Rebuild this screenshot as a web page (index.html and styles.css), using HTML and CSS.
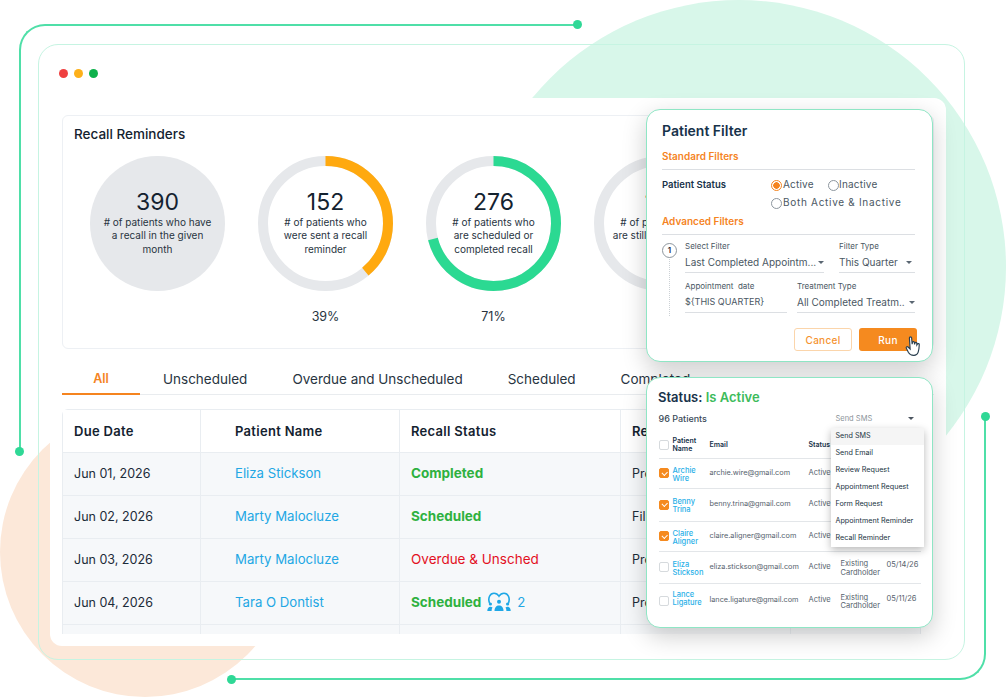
FILE: index.html
```html
<!DOCTYPE html>
<html lang="en">
<head>
    <meta charset="UTF-8">
    <title>Recall Reminders</title>
    <link rel="stylesheet" href="styles.css">
</head>
<body>
<div class="stage">
    <div class="blob blob-green"></div>
    <div class="blob blob-peach"></div>
    <div class="line line-top"></div>
    <div class="line line-bottom"></div>

    <div class="frame">
        <div class="window-dots">
            <span class="dot dot-red"></span>
            <span class="dot dot-yellow"></span>
            <span class="dot dot-green"></span>
        </div>

        <div class="panel">
            <section class="recall-card">
                <h2>Recall Reminders</h2>
                <div class="stats">
                    <div class="stat">
                        <div class="ring ring-solid">
                            <strong>390</strong>
                            <p># of patients who have a recall in the given month</p>
                        </div>
                    </div>
                    <div class="stat">
                        <div class="ring">
                            <svg viewBox="0 0 135 135"><circle class="track" cx="67.5" cy="67.5" r="62.5" pathLength="100"/><circle class="value-orange" cx="67.5" cy="67.5" r="62.5" pathLength="100" stroke-dasharray="39 100"/></svg>
                            <strong>152</strong>
                            <p># of patients who were sent a recall reminder</p>
                        </div>
                        <span class="percent">39%</span>
                    </div>
                    <div class="stat">
                        <div class="ring">
                            <svg viewBox="0 0 135 135"><circle class="track" cx="67.5" cy="67.5" r="62.5" pathLength="100"/><circle class="value-green" cx="67.5" cy="67.5" r="62.5" pathLength="100" stroke-dasharray="71 100"/></svg>
                            <strong>276</strong>
                            <p># of patients who are scheduled or completed recall</p>
                        </div>
                        <span class="percent">71%</span>
                    </div>
                    <div class="stat">
                        <div class="ring">
                            <svg viewBox="0 0 135 135"><circle class="track" cx="67.5" cy="67.5" r="62.5" pathLength="100"/></svg>
                            <strong>114</strong>
                            <p># of patients who are still unscheduled</p>
                        </div>
                    </div>
                </div>
            </section>

            <nav class="tabs">
                <a class="tab tab-active">All</a>
                <a class="tab">Unscheduled</a>
                <a class="tab">Overdue and Unscheduled</a>
                <a class="tab">Scheduled</a>
                <a class="tab">Completed</a>
            </nav>

            <div class="table-wrap">
                <table class="recall-table">
                    <thead>
                        <tr><th>Due Date</th><th class="pad-name">Patient Name</th><th>Recall Status</th><th>Recall Type</th><th></th></tr>
                    </thead>
                    <tbody>
                        <tr>
                            <td>Jun 01, 2026</td>
                            <td class="pad-name link">Eliza Stickson</td>
                            <td class="done">Completed</td>
                            <td>Prophy</td>
                            <td class="actions"><i class="act act-a"></i><i class="act act-b"></i><i class="act act-c"></i></td>
                        </tr>
                        <tr>
                            <td>Jun 02, 2026</td>
                            <td class="pad-name link">Marty Malocluze</td>
                            <td class="done">Scheduled</td>
                            <td>Fillings</td>
                            <td class="actions"><i class="act act-a"></i><i class="act act-b"></i><i class="act act-c"></i></td>
                        </tr>
                        <tr>
                            <td>Jun 03, 2026</td>
                            <td class="pad-name link">Marty Malocluze</td>
                            <td class="late">Overdue &amp; Unsched</td>
                            <td>Prophy</td>
                            <td class="actions"><i class="act act-a"></i><i class="act act-b"></i><i class="act act-c"></i></td>
                        </tr>
                        <tr>
                            <td>Jun 04, 2026</td>
                            <td class="pad-name link">Tara O Dontist</td>
                            <td>
                                <div class="status-group">
                                    <span class="done">Scheduled</span>
                                    <svg class="family-icon" viewBox="0 0 24 20">
                                        <path class="family-arc" d="M2.5 11C.6 6 3 1.2 7 1.2c2.300 0 3.900 1.200 5 3 1.100-1.800 2.700-3 5-3 4 0 6.400 4.800 4.500 9.800"/>
                                        <circle cx="12" cy="9.800" r="2"/>
                                        <path d="M7.500 19c0-3.600 1.900-5.600 4.500-5.600s4.500 2 4.500 5.600z"/>
                                        <circle cx="3.400" cy="12" r="1.600"/>
                                        <circle cx="20.600" cy="12" r="1.600"/>
                                        <path d="M.3 19c0-2.600 1.300-4.300 3.100-4.300.8 0 1.500.3 2.100.9-.6 1-.9 2.100-.9 3.400zM23.700 19c0-2.600-1.300-4.300-3.100-4.300-.8 0-1.500.3-2.100.9.6 1 .9 2.100.9 3.400z"/>
                                    </svg>
                                    <span class="link">2</span>
                                </div>
                            </td>
                            <td>Prophy</td>
                            <td class="actions"><i class="act act-a"></i><i class="act act-b"></i><i class="act act-c"></i></td>
                        </tr>
                        <tr>
                            <td></td><td></td><td></td><td></td>
                            <td class="actions"><i class="act act-a"></i><i class="act act-b"></i><i class="act act-c"></i></td>
                        </tr>
                    </tbody>
                </table>
            </div>
        </div>
    </div>

    <!-- Patient filter popup -->
    <section class="float-card filter-card">
        <h3>Patient Filter</h3>
        <h4 class="filter-head">Standard Filters</h4>
        <div class="status-row">
            <b>Patient Status</b>
            <div class="radios">
                <label class="radio radio-on">Active</label>
                <label class="radio radio-tight">Inactive</label>
                <label class="radio radio-wide">Both Active &amp; Inactive</label>
            </div>
        </div>
        <h4 class="filter-head filter-head-adv">Advanced Filters</h4>
        <div class="adv">
            <div class="step"><span>1</span></div>
            <div class="adv-fields">
                <div class="field-row">
                    <div class="field field-a">
                        <small>Select Filter</small>
                        <div class="field-value">Last Completed Appointm...<i class="caret"></i></div>
                    </div>
                    <div class="field field-b">
                        <small>Filter Type</small>
                        <div class="field-value">This Quarter<i class="caret caret-in"></i></div>
                    </div>
                </div>
                <div class="field-row field-row-2">
                    <div class="field field-c">
                        <small>Appointment&nbsp; date</small>
                        <div class="field-value">${THIS QUARTER}</div>
                    </div>
                    <div class="field field-d">
                        <small>Treatment Type</small>
                        <div class="field-value">All Completed Treatm..<i class="caret"></i></div>
                    </div>
                </div>
            </div>
        </div>
        <div class="buttons">
            <button class="btn btn-cancel">Cancel</button>
            <button class="btn btn-run">Run</button>
        </div>
        <svg class="hand" viewBox="0 0 15 20">
            <path d="M3.600 1.800c0-1.300 2-1.300 2.100 0l.5 6 .3-1.700c.2-1.200 1.900-1 1.900.2l.1 1.700.4-1.300c.3-1.100 1.900-.8 1.800.4l0 1.400.5-.8c.5-.9 1.900-.5 1.800.6-.1 2.600-.3 5.200-1.100 7.300-.6 1.600-1.900 2.900-3.900 2.900-2.700.1-4.300-.9-5.300-2.700L.7 11.700c-.7-1.100.7-2.100 1.600-1.200l2 2z"/>
        </svg>
    </section>

    <!-- Status list popup -->
    <section class="float-card status-card">
        <h3>Status: <span class="is-active">Is Active</span></h3>
        <div class="status-top">
            <span class="count">96 Patients</span>
            <span class="send">Send SMS<i class="caret caret-dark"></i></span>
        </div>
        <div class="plist">
            <div class="prow prow-head">
                <i class="check"></i>
                <b>Patient Name</b>
                <b>Email</b>
                <b>Status</b>
            </div>
            <div class="prow">
                <i class="check check-on"></i>
                <a>Archie Wire</a>
                <span class="mail">archie.wire@gmail.com</span>
                <span>Active</span>
            </div>
            <div class="prow">
                <i class="check check-on"></i>
                <a>Benny Trina</a>
                <span class="mail">benny.trina@gmail.com</span>
                <span>Active</span>
            </div>
            <div class="prow">
                <i class="check check-on"></i>
                <a>Claire Aligner</a>
                <span class="mail">claire.aligner@gmail.com</span>
                <span>Active</span>
            </div>
            <div class="prow">
                <i class="check"></i>
                <a>Eliza Stickson</a>
                <span class="mail">eliza.stickson@gmail.com</span>
                <span>Active</span>
                <span class="card-type">Existing Cardholder</span>
                <span class="card-date">05/14/26</span>
            </div>
            <div class="prow prow-last">
                <i class="check"></i>
                <a>Lance Ligature</a>
                <span class="mail">lance.ligature@gmail.com</span>
                <span>Active</span>
                <span class="card-type">Existing Cardholder</span>
                <span class="card-date">05/11/26</span>
            </div>
        </div>
        <ul class="menu">
            <li class="menu-hover">Send SMS</li>
            <li>Send Email</li>
            <li>Review Request</li>
            <li>Appointment Request</li>
            <li>Form Request</li>
            <li>Appointment Reminder</li>
            <li>Recall Reminder</li>
        </ul>
    </section>
</div>
</body>
</html>
```

FILE: styles.css
```css
* {
    box-sizing: border-box;
}
body {
    margin: 0;
    background: #fff;
    font-family: 'Inter', 'Open Sans', sans-serif;
    color: #1c2b39;
}
h2, h3, h4, p, ul {
    margin: 0;
    padding: 0;
}
.stage {
    position: relative;
    width: 1007px;
    height: 698px;
    overflow: hidden;
    padding: 44px 42px 38px 38px;
}

/* Background shapes */
.blob {
    position: absolute;
    border-radius: 50%;
}
.blob-green {
    left: 472px;
    top: 0;
    width: 534px;
    height: 534px;
    background: #d8f7ea;
}
.blob-peach {
    left: 0;
    top: 407px;
    width: 290px;
    height: 290px;
    background: #fce8d9;
}
.line {
    position: absolute;
    border: 0 solid #4fdfa8;
}
.line::before, .line::after {
    content: "";
    position: absolute;
    width: 9px;
    height: 9px;
    border-radius: 50%;
    background: #2fd896;
}
.line-top {
    left: 19px;
    top: 24px;
    width: 559px;
    height: 428px;
    border-width: 2px 0 0 2px;
    border-top-left-radius: 26px;
}
.line-top::before {
    right: -4px;
    top: -6px;
}
.line-top::after {
    left: -6px;
    bottom: -4px;
}
.line-bottom {
    left: 231px;
    top: 416px;
    width: 755px;
    height: 264px;
    border-width: 0 2px 2px 0;
    border-bottom-right-radius: 26px;
}
.line-bottom::before {
    right: -6px;
    top: -4px;
}
.line-bottom::after {
    left: -4px;
    bottom: -6px;
}

/* Window */
.frame {
    position: relative;
    width: 927px;
    height: 616px;
    border: 1px solid #c6f4e2;
    border-radius: 20px;
    padding: 24px 0 0 11px;
}
.window-dots {
    display: flex;
    gap: 6px;
    height: 9px;
    margin: 0 0 20px 9px;
}
.dot {
    width: 9px;
    height: 9px;
    border-radius: 50%;
}
.dot-red { background: #ef4040; }
.dot-yellow { background: #fdb01a; }
.dot-green { background: #0eb14b; }
.panel {
    width: 896px;
    height: 548px;
    background: #fff;
    border-radius: 12px;
    padding: 17px 12px 0;
}

/* Recall card */
.recall-card {
    height: 234px;
    border: 1px solid #edf0f4;
    border-radius: 6px;
    padding: 10px 0 0 11px;
}
.recall-card h2 {
    font-size: 13.5px;
    font-weight: 500;
    line-height: 17px;
    color: #14222f;
}
.stats {
    display: flex;
    gap: 33px;
    margin: 13px 0 0 16px;
}
.stat {
    display: flex;
    flex-direction: column;
    align-items: center;
}
.ring {
    position: relative;
    width: 135px;
    height: 135px;
    border-radius: 50%;
    padding: 34px 18px 0;
    text-align: center;
}
.ring-solid {
    background: #e6e8eb;
    padding: 34px 12px 0;
}
.ring svg {
    position: absolute;
    left: 0;
    top: 0;
    width: 135px;
    height: 135px;
    transform: rotate(-90deg);
}
.ring circle {
    fill: none;
    stroke-width: 10;
}
.track { stroke: #e6e8eb; }
.value-orange { stroke: #ffa90f; }
.value-green { stroke: #2bd992; }
.ring strong {
    display: block;
    position: relative;
    font-size: 23px;
    font-weight: 400;
    line-height: 25px;
    color: #14222f;
}
.ring p {
    position: relative;
    margin-top: 0.5px;
    font-size: 10px;
    line-height: 13.5px;
    color: #28343f;
}
.percent {
    margin-top: 18px;
    font-size: 12.5px;
    line-height: 16px;
    color: #28343f;
}

/* Tabs */
.tabs {
    display: flex;
    gap: 45px;
    height: 30px;
    margin-top: 16px;
    border-bottom: 1px solid #e9ecef;
}
.tab {
    font-size: 13.5px;
    line-height: 28px;
    color: #28343f;
    white-space: nowrap;
}
.tab-active {
    width: 78px;
    height: 30px;
    margin-right: -22px;
    border-bottom: 2px solid #f5841f;
    color: #f5841f;
    font-size: 12.5px;
    font-weight: 600;
    text-align: center;
}

/* Table */
.table-wrap {
    height: 225px;
    margin-top: 14px;
    overflow: hidden;
    border-radius: 6px 6px 0 0;
}
.recall-table {
    width: 859px;
    table-layout: fixed;
    border-collapse: collapse;
    font-size: 12.5px;
    color: #1c2b39;
}
.recall-table th:nth-child(1) { width: 138px; }
.recall-table th:nth-child(2) { width: 199px; }
.recall-table th:nth-child(3) { width: 221px; }
.recall-table th:nth-child(4) { width: 170px; }
.recall-table th, .recall-table td {
    height: 43px;
    padding: 0 0 2px 11px;
    border: 1px solid #e9edf1;
    text-align: left;
    white-space: nowrap;
}
.recall-table th {
    padding-bottom: 0;
    font-size: 13px;
    font-weight: 600;
    letter-spacing: 0.3px;
    color: #14222f;
}
.recall-table tbody tr {
    background: #f6f8fa;
}
.recall-table .pad-name {
    padding-left: 34px;
}
.link {
    color: #22a7e4;
    font-size: 13.2px;
}
.done {
    color: #2eb13f;
    font-size: 13.5px;
    font-weight: 700;
}
.late {
    color: #e3101f;
    font-size: 13.5px;
}
.status-group {
    display: flex;
    align-items: center;
}
.family-icon {
    width: 24px;
    height: 20px;
    margin: 0 6px 0 6px;
    fill: #1ea7e6;
}
.family-arc {
    fill: none;
    stroke: #1ea7e6;
    stroke-width: 1.6;
}
.recall-table .actions {
    padding: 0;
}
.actions {
    font-size: 0;
}
.act {
    display: inline-block;
    width: 24px;
    height: 24px;
    margin-left: 9px;
    border-radius: 50%;
    vertical-align: middle;
}
.actions .act:first-child { margin-left: 15px; }
.act-a { background: #8dbf9b; }
.act-b { background: #1eab3c; }
.act-c { background: #5f7487; }

/* Floating cards */
.float-card {
    position: absolute;
    left: 646px;
    width: 287px;
    background: #fff;
    border: 1.5px solid #8fe6c5;
    border-radius: 14px;
    box-shadow: 0 8px 24px rgba(0, 0, 0, 0.2);
}
.float-card h3 {
    font-weight: 600;
    color: #17324a;
}
.filter-card {
    top: 109px;
    height: 253px;
    padding: 12px 17px 0 15px;
}
.filter-card h3 {
    font-size: 14px;
    line-height: 18px;
}
.filter-head {
    height: 21px;
    margin-top: 9px;
    border-bottom: 1px solid #dcdfe3;
    font-size: 10px;
    font-weight: 600;
    line-height: 14px;
    color: #f5841f;
}
.filter-head-adv {
    margin-top: 3px;
}
.status-row {
    display: flex;
    margin-top: 5px;
    font-size: 9.5px;
}
.status-row b {
    flex: none;
    width: 109px;
    line-height: 19px;
    font-weight: 600;
    color: #17324a;
}
.radios {
    display: flex;
    flex-wrap: wrap;
    flex: none;
    width: 143px;
    font-size: 10px;
    letter-spacing: 0.2px;
    line-height: 18px;
    color: #4a5763;
}
.radio {
    position: relative;
    padding-left: 12px;
}
.radio::before {
    content: "";
    position: absolute;
    left: 0;
    top: 5px;
    width: 9px;
    height: 9px;
    border: 1px solid #8d969e;
    border-radius: 50%;
    background: #fff;
}
.radio-on {
    width: 57px;
}
.radio-on::before {
    border-color: #f5841f;
    background: radial-gradient(circle, #f5841f 3px, #fff 3.500px);
}
.radio-tight {
    padding-left: 11px;
}
.radio-wide {
    width: 143px;
    letter-spacing: 0.7px;
}
.adv {
    display: flex;
    margin-top: 5px;
}
.step {
    width: 23px;
    height: 74px;
    margin-top: 3px;
    background: linear-gradient(#ccd1d5 50%, transparent 50%) 7px 0 / 1px 2px repeat-y;
}
.step span {
    display: block;
    width: 15px;
    height: 15px;
    border: 1px solid #8d969e;
    border-radius: 50%;
    background: #fff;
    font-size: 8px;
    font-weight: 600;
    line-height: 13px;
    text-align: center;
}
.adv-fields {
    flex: 1;
}
.field-row {
    display: flex;
    gap: 15px;
}
.field-row-2 {
    gap: 10px;
    margin-top: 7px;
}
.field {
    height: 33px;
    border-bottom: 1px solid #dcdfe3;
}
.field small {
    display: block;
    font-size: 8px;
    line-height: 12px;
    color: #4a5763;
}
.field-value {
    position: relative;
    margin-top: 3px;
    font-size: 10px;
    line-height: 14px;
    color: #4a5763;
    white-space: nowrap;
}
.field-a { width: 139px; }
.field-b { width: 76px; }
.field-c { width: 102px; }
.field-d { width: 118px; }
.field-c .field-value {
    font-size: 9px;
}
.caret {
    position: absolute;
    right: 0;
    top: 6px;
    border: 3px solid transparent;
    border-top: 3.500px solid #5a6672;
    border-bottom: 0;
}
.caret-in {
    right: 3px;
}
.buttons {
    display: flex;
    justify-content: flex-end;
    gap: 7px;
    margin: 11px -2px 0 0;
}
.btn {
    width: 58px;
    height: 23px;
    border-radius: 3px;
    padding: 0;
    font-family: inherit;
    font-size: 10px;
    letter-spacing: 0.3px;
    font-weight: 500;
}
.btn-cancel {
    background: #fff;
    border: 1px solid #fbd5ab;
    color: #f5932f;
}
.btn-run {
    background: #f58a1f;
    border: none;
    color: #fff;
}
.hand {
    position: absolute;
    left: 258px;
    top: 226px;
    width: 17px;
    height: 21px;
    fill: #fff;
    stroke: #2a3f4f;
    stroke-width: 1.100;
}

/* Status card */
.status-card {
    top: 377px;
    height: 251px;
    padding: 10px 11px 0 11px;
}
.status-card h3 {
    font-size: 13px;
    line-height: 18px;
}
.is-active {
    color: #3dbb5b;
}
.status-top {
    display: flex;
    justify-content: space-between;
    margin-top: 7px;
    font-size: 9px;
    line-height: 12px;
}
.count {
    margin-left: 0.5px;
    color: #3a4a58;
    font-weight: 500;
}
.send {
    position: relative;
    width: 84px;
    margin-right: 4px;
    padding-left: 2.500px;
    font-size: 7.500px;
    color: #8b939a;
}
.caret-dark {
    right: 3px;
    top: 4px;
    border-top-color: #4c5560;
}
.plist {
    display: grid;
    grid-template-rows: 24px 30px 33px 30px 32px 34px;
    margin: 9.500px 0 0 0.5px;
}
.prow {
    display: grid;
    grid-template-columns: 14px 37px 99px 32px 46px 1fr;
    align-items: center;
    border-bottom: 1px solid #e3e6e9;
    font-size: 7.500px;
    line-height: 8.500px;
    color: #55616c;
}
.prow-head {
    padding-bottom: 2px;
    font-size: 7px;
    line-height: 8px;
}
.prow-head b {
    font-weight: 600;
    color: #17324a;
}
.prow-last {
    border-bottom: none;
}
.prow a {
    margin-top: 3px;
    color: #2ab0e8;
    font-weight: 500;
    font-size: 7.500px;
    line-height: 8px;
}
.prow-last a {
    margin-top: -4px;
}
.prow .mail {
    font-size: 7.300px;
}
.card-type {
    margin-top: 3px;
}
.card-date {
    margin-bottom: 3px;
}
.check {
    position: relative;
    width: 10px;
    height: 10px;
    border: 1px solid #d6dadd;
    border-radius: 2px;
    background: #fff;
}
.check-on {
    background: #f58a1f;
    border-color: #f58a1f;
}
.check-on::after {
    content: "";
    position: absolute;
    left: 2px;
    top: 1.500px;
    width: 4px;
    height: 2.500px;
    border-left: 1px solid #fff;
    border-bottom: 1px solid #fff;
    transform: rotate(-45deg);
}
.menu {
    position: absolute;
    left: 183.500px;
    top: 50px;
    width: 93px;
    height: 119px;
    list-style: none;
    background: #fff;
    box-shadow: 0 3px 8px rgba(0, 0, 0, 0.28);
}
.menu li {
    height: 17px;
    padding-left: 5px;
    font-size: 7.200px;
    line-height: 16px;
    color: #223342;
}
.menu-hover {
    background: #f5f5f5;
}
```
